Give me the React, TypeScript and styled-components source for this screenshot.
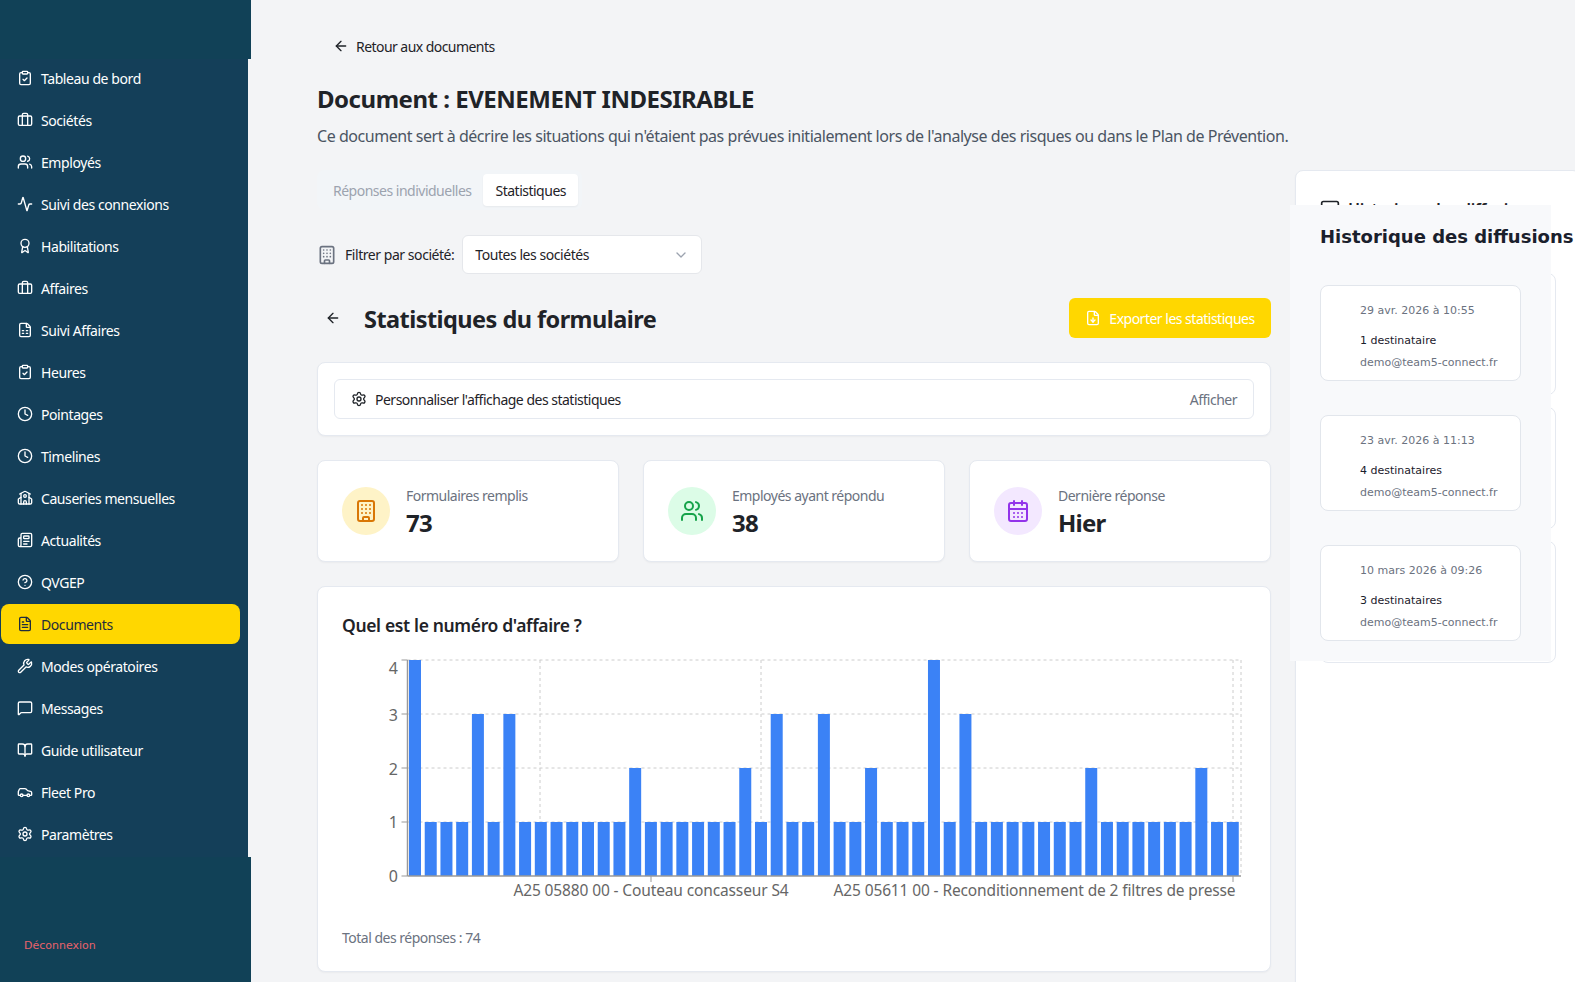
import styled, { createGlobalStyle } from 'styled-components';
import {
  Activity, ArrowLeft, Award, BookOpen, Briefcase, Building, CalendarDays, Car, ChevronDown, CircleHelp,
  ClipboardCheck, Clock, FileDown, FileSpreadsheet, FileText, MessageSquare, Newspaper, School, Settings,
  Users, Wrench,
} from 'lucide-react';

const GlobalStyle = createGlobalStyle`
  html, body {
    margin: 0;
    height: 982px;
    overflow: hidden;
    background: #f3f4f6;
    font-family: "Noto Sans", "Open Sans", Arial, sans-serif;
    color: #1f2328;
  }
  * { box-sizing: border-box; }
`;

const Layout = styled.div`
  display: flex;
  height: 982px;
  overflow: hidden;
`;

const Sidebar = styled.aside`
  width: 251px;
  flex: none;
  height: 982px;
  padding-top: 59px;
  background: #114157;
  display: flex;
  flex-direction: column;
`;

const Nav = styled.nav`
  height: 798px;
  background: #143f59;
  border-right: 3px solid #f3f4f6;
  display: flex;
  flex-direction: column;
  gap: 2px;
  padding-left: 1px;
`;

const NavItem = styled.a<{ $active?: boolean }>`
  width: 239px;
  height: 40px;
  flex: none;
  display: flex;
  align-items: center;
  gap: 8px;
  padding-left: 16px;
  border-radius: 8px;
  font-size: 14px;
  letter-spacing: -0.42px;
  color: ${p => (p.$active ? '#1f2d3d' : '#ffffff')};
  background: ${p => (p.$active ? '#ffd700' : 'transparent')};
  svg { flex: none; }
  &:first-child { margin-top: -1px; }
`;

const Logout = styled.div`
  margin-top: 82px;
  padding-left: 24px;
  font-family: "DejaVu Sans", sans-serif;
  font-size: 11px;
  color: #e8616b;
`;

const Main = styled.main`
  flex: 1;
  min-width: 0;
  padding: 34px 0 0 66px;
`;

const BackLink = styled.a`
  display: flex;
  align-items: center;
  gap: 7px;
  height: 24px;
  padding-left: 16px;
  font-size: 14px;
  letter-spacing: -0.55px;
  color: #1f2328;
`;

const Title = styled.h1`
  margin: 25px 0 0;
  font-size: 24px;
  line-height: 32px;
  font-weight: 700;
  letter-spacing: -0.48px;
  color: #1f2328;
`;

const Subtitle = styled.p`
  margin: 9px 0 0;
  font-size: 16px;
  line-height: 24px;
  letter-spacing: -0.455px;
  color: #4b5563;
`;

const Columns = styled.div`
  display: grid;
  grid-template-columns: 954px 286px;
  column-gap: 24px;
  margin-top: 22px;
`;

const LeftColumn = styled.div`
  display: flex;
  flex-direction: column;
  gap: 24px;
`;

const Tabs = styled.div`
  display: flex;
  align-self: flex-start;
  height: 40px;
  padding: 4px;
  border-radius: 8px;
  background: #f2f5f8;
`;

const Tab = styled.div<{ $active?: boolean }>`
  display: flex;
  align-items: center;
  padding: 0 12px;
  border-radius: 4px;
  font-size: 14px;
  letter-spacing: -0.5px;
  color: ${p => (p.$active ? '#1f2328' : '#9ca3af')};
  background: ${p => (p.$active ? '#ffffff' : 'transparent')};
  box-shadow: ${p => (p.$active ? '0 1px 2px rgba(0,0,0,0.05)' : 'none')};
`;

const FilterRow = styled.div`
  display: flex;
  align-items: center;
  height: 39px;
  gap: 8px;
  margin-top: 1px;
  font-size: 14px;
  letter-spacing: -0.45px;
  svg { color: #6b7280; }
`;

const Select = styled.div`
  width: 240px;
  height: 39px;
  padding: 0 12px;
  display: flex;
  align-items: center;
  justify-content: space-between;
  background: #ffffff;
  border: 1px solid #e5e7eb;
  border-radius: 6px;
  svg { color: #9ca3af; }
`;

const StatsHeader = styled.div`
  display: flex;
  align-items: center;
  justify-content: space-between;
  height: 40px;
`;

const StatsTitle = styled.div`
  display: flex;
  align-items: center;
  gap: 23px;
  padding-left: 8px;
  h2 {
    margin: 2px 0 0;
    font-size: 23.5px;
    font-weight: 700;
    letter-spacing: -0.55px;
    color: #1f2328;
  }
`;

const ExportButton = styled.button`
  width: 202px;
  height: 40px;
  display: flex;
  align-items: center;
  justify-content: center;
  gap: 8px;
  border: none;
  border-radius: 6px;
  background: #ffd700;
  color: #ffffff;
  font-family: inherit;
  font-size: 14px;
  letter-spacing: -0.5px;
`;

const Card = styled.section`
  background: #ffffff;
  border: 1px solid #e5e9f0;
  border-radius: 8px;
  box-shadow: 0 1px 2px rgba(0, 0, 0, 0.04);
`;

const CustomCard = styled(Card)`
  padding: 16px;
`;

const CustomRow = styled.div`
  height: 40px;
  display: flex;
  align-items: center;
  justify-content: space-between;
  padding: 0 16px;
  border: 1px solid #e5e9f0;
  border-radius: 6px;
  font-size: 14px;
  letter-spacing: -0.5px;
  span:last-child { color: #6b7280; }
`;

const CustomLabel = styled.span`
  display: flex;
  align-items: center;
  gap: 8px;
`;

const StatsGrid = styled.div`
  display: grid;
  grid-template-columns: repeat(3, 1fr);
  gap: 24px;
`;

const StatCard = styled(Card)`
  display: flex;
  align-items: center;
  gap: 16px;
  height: 102px;
  padding: 0 24px;
`;

const StatIcon = styled.div<{ $bg: string; $fg: string }>`
  width: 48px;
  height: 48px;
  flex: none;
  display: flex;
  align-items: center;
  justify-content: center;
  border-radius: 50%;
  background: ${p => p.$bg};
  color: ${p => p.$fg};
`;

const StatBody = styled.div`
  padding-top: 3px;
`;

const StatLabel = styled.div`
  font-size: 14px;
  line-height: 20px;
  letter-spacing: -0.5px;
  color: #6b7280;
`;

const StatValue = styled.div`
  margin-top: 1px;
  font-size: 24px;
  line-height: 32px;
  font-weight: 700;
  letter-spacing: -0.8px;
  color: #1f2328;
`;

const ChartCard = styled(Card)`
  height: 386px;
  padding: 24px 24px 0;
  h3 {
    margin: 0 0 11px;
    font-size: 17.5px;
    line-height: 28px;
    font-weight: 600;
    letter-spacing: -0.35px;
    color: #1f2328;
  }
`;

const ChartTotal = styled.div`
  margin-top: 16px;
  font-size: 14px;
  line-height: 20px;
  letter-spacing: -0.5px;
  color: #6b7280;
`;

const RightColumn = styled.div`
  position: relative;
`;

const HistoryPanel = styled(Card)`
  height: 900px;
  padding: 24px;
`;

const HistoryHeading = styled.div`
  display: flex;
  align-items: center;
  gap: 8px;
  height: 28px;
  margin-bottom: 50px;
  font-size: 16px;
  font-weight: 600;
  letter-spacing: -0.3px;
  white-space: nowrap;
  svg { flex: none; }
`;

const GhostList = styled.div`
  display: flex;
  flex-direction: column;
  gap: 12px;
`;

const GhostCard = styled.div`
  height: 122px;
  border: 1px solid #e5e9f0;
  border-radius: 8px;
`;

const Overlay = styled.div`
  position: absolute;
  top: 35px;
  left: -5px;
  width: 261px;
  height: 456px;
  padding: 20px 0 0 30px;
  background: #f8f9fb;
  font-family: "DejaVu Sans", sans-serif;
`;

const OverlayTitle = styled.div`
  font-size: 18px;
  line-height: 24px;
  font-weight: 700;
  white-space: nowrap;
  color: #1a202c;
  margin-bottom: 36px;
`;

const OverlayList = styled.div`
  display: flex;
  flex-direction: column;
  gap: 34px;
`;

const SendCard = styled.div`
  width: 201px;
  height: 96px;
  padding: 18px 0 0 39px;
  background: #ffffff;
  border: 1px solid #e2e6ec;
  border-radius: 8px;
  font-size: 11px;
  line-height: 14px;
`;

const SendDate = styled.div`
  color: #6b7280;
`;

const SendCount = styled.div`
  margin-top: 16px;
  color: #1a202c;
`;

const SendMail = styled.div`
  margin-top: 8px;
  color: #6b7280;
`;

const navItems = [
  { label: 'Tableau de bord', Icon: ClipboardCheck },
  { label: 'Sociétés', Icon: Briefcase },
  { label: 'Employés', Icon: Users },
  { label: 'Suivi des connexions', Icon: Activity },
  { label: 'Habilitations', Icon: Award },
  { label: 'Affaires', Icon: Briefcase },
  { label: 'Suivi Affaires', Icon: FileSpreadsheet },
  { label: 'Heures', Icon: ClipboardCheck },
  { label: 'Pointages', Icon: Clock },
  { label: 'Timelines', Icon: Clock },
  { label: 'Causeries mensuelles', Icon: School },
  { label: 'Actualités', Icon: Newspaper },
  { label: 'QVGEP', Icon: CircleHelp },
  { label: 'Documents', Icon: FileText, active: true },
  { label: 'Modes opératoires', Icon: Wrench },
  { label: 'Messages', Icon: MessageSquare },
  { label: 'Guide utilisateur', Icon: BookOpen },
  { label: 'Fleet Pro', Icon: Car },
  { label: 'Paramètres', Icon: Settings },
];

const answers = [
  4, 1, 1, 1, 3, 1, 3, 1, 1, 1, 1, 1, 1, 1, 2, 1, 1, 1, 1, 1, 1, 2, 1, 3, 1, 1, 3, 1, 1, 2, 1, 1, 1, 4, 1, 3,
  1, 1, 1, 1, 1, 1, 1, 2, 1, 1, 1, 1, 1, 1, 2, 1, 1,
];

const sends = [
  { date: '29 avr. 2026 à 10:55', count: '1 destinataire' },
  { date: '23 avr. 2026 à 11:13', count: '4 destinataires' },
  { date: '10 mars 2026 à 09:26', count: '3 destinataires' },
];

// chart coordinates are page pixels minus the svg origin
const BarChart = () => {
  const left = 65.5;
  const right = 899;
  const bottom = 226;
  const unit = 54;
  const pitch = (right - left) / answers.length;
  const grid = { stroke: '#cccccc', strokeDasharray: '3 3' };
  return (
    <svg width="904" height="262" style={{ display: 'block' }} fontFamily='"Noto Sans", sans-serif'>
      {[1, 2, 3, 4].map(v => (
        <line key={v} x1={left} x2={right} y1={bottom - v * unit} y2={bottom - v * unit} {...grid} />
      ))}
      {[198, 419, 891, right].map(x => (
        <line key={x} x1={x} x2={x} y1={10} y2={bottom} {...grid} />
      ))}
      {answers.map((v, i) => (
        <rect key={i} x={left + pitch * i + 1.5} y={bottom - v * unit} width={12} height={v * unit} fill="#3b82f6" />
      ))}
      <g stroke="#999999">
        <line x1={left} x2={right} y1={bottom} y2={bottom} strokeWidth={1.5} />
        <line x1={left} x2={left} y1={10} y2={bottom} strokeWidth={1.5} />
        {[0, 1, 2, 3, 4].map(v => (
          <line key={v} x1={left - 6} x2={left} y1={bottom - v * unit} y2={bottom - v * unit} />
        ))}
        <line x1={309} x2={309} y1={bottom} y2={bottom + 6} />
        <line x1={891} x2={891} y1={bottom} y2={bottom + 6} />
      </g>
      <g fontSize="16" fill="#666666" textAnchor="end">
        <text x={56} y={24}>4</text>
        <text x={56} y={71}>3</text>
        <text x={56} y={125}>2</text>
        <text x={56} y={178}>1</text>
        <text x={56} y={232}>0</text>
      </g>
      <g fontSize="15.5" fill="#666666" textAnchor="middle" letterSpacing="-0.13">
        <text x={309} y={246}>A25 05880 00 - Couteau concasseur S4</text>
        <text x={692.5} y={246}>A25 05611 00 - Reconditionnement de 2 filtres de presse</text>
      </g>
    </svg>
  );
};

const App = () => {
  return (
    <Layout>
      <GlobalStyle />
      <Sidebar>
        <Nav>
          {navItems.map(({ label, Icon, active }) => (
            <NavItem key={label} $active={active}>
              <Icon size={16} strokeWidth={2} />
              {label}
            </NavItem>
          ))}
        </Nav>
        <Logout>Déconnexion</Logout>
      </Sidebar>
      <Main>
        <BackLink>
          <ArrowLeft size={16} />
          Retour aux documents
        </BackLink>
        <Title>Document : EVENEMENT INDESIRABLE</Title>
        <Subtitle>
          Ce document sert à décrire les situations qui n'étaient pas prévues initialement lors de l'analyse des
          risques ou dans le Plan de Prévention.
        </Subtitle>
        <Columns>
          <LeftColumn>
            <Tabs>
              <Tab>Réponses individuelles</Tab>
              <Tab $active>Statistiques</Tab>
            </Tabs>
            <FilterRow>
              <Building size={20} />
              Filtrer par société:
              <Select>
                Toutes les sociétés
                <ChevronDown size={16} />
              </Select>
            </FilterRow>
            <StatsHeader>
              <StatsTitle>
                <ArrowLeft size={16} />
                <h2>Statistiques du formulaire</h2>
              </StatsTitle>
              <ExportButton>
                <FileDown size={16} />
                Exporter les statistiques
              </ExportButton>
            </StatsHeader>
            <CustomCard>
              <CustomRow>
                <CustomLabel>
                  <Settings size={16} />
                  Personnaliser l'affichage des statistiques
                </CustomLabel>
                <span>Afficher</span>
              </CustomRow>
            </CustomCard>
            <StatsGrid>
              <StatCard>
                <StatIcon $bg="#fef3c7" $fg="#d97706">
                  <Building size={24} />
                </StatIcon>
                <StatBody>
                  <StatLabel>Formulaires remplis</StatLabel>
                  <StatValue>73</StatValue>
                </StatBody>
              </StatCard>
              <StatCard>
                <StatIcon $bg="#dcfce7" $fg="#16a34a">
                  <Users size={24} />
                </StatIcon>
                <StatBody>
                  <StatLabel>Employés ayant répondu</StatLabel>
                  <StatValue>38</StatValue>
                </StatBody>
              </StatCard>
              <StatCard>
                <StatIcon $bg="#f3e8ff" $fg="#9333ea">
                  <CalendarDays size={24} />
                </StatIcon>
                <StatBody>
                  <StatLabel>Dernière réponse</StatLabel>
                  <StatValue>Hier</StatValue>
                </StatBody>
              </StatCard>
            </StatsGrid>
            <ChartCard>
              <h3>Quel est le numéro d'affaire ?</h3>
              <BarChart />
              <ChartTotal>Total des réponses : 74</ChartTotal>
            </ChartCard>
          </LeftColumn>
          <RightColumn>
            <HistoryPanel>
              <HistoryHeading>
                <MessageSquare size={20} />
                <span>Historique des diffusions</span>
              </HistoryHeading>
              <GhostList>
                <GhostCard />
                <GhostCard />
                <GhostCard />
              </GhostList>
            </HistoryPanel>
            <Overlay>
              <OverlayTitle>Historique des diffusions</OverlayTitle>
              <OverlayList>
                {sends.map(s => (
                  <SendCard key={s.date}>
                    <SendDate>{s.date}</SendDate>
                    <SendCount>{s.count}</SendCount>
                    <SendMail>demo@team5-connect.fr</SendMail>
                  </SendCard>
                ))}
              </OverlayList>
            </Overlay>
          </RightColumn>
        </Columns>
      </Main>
    </Layout>
  );
};

export default App;
